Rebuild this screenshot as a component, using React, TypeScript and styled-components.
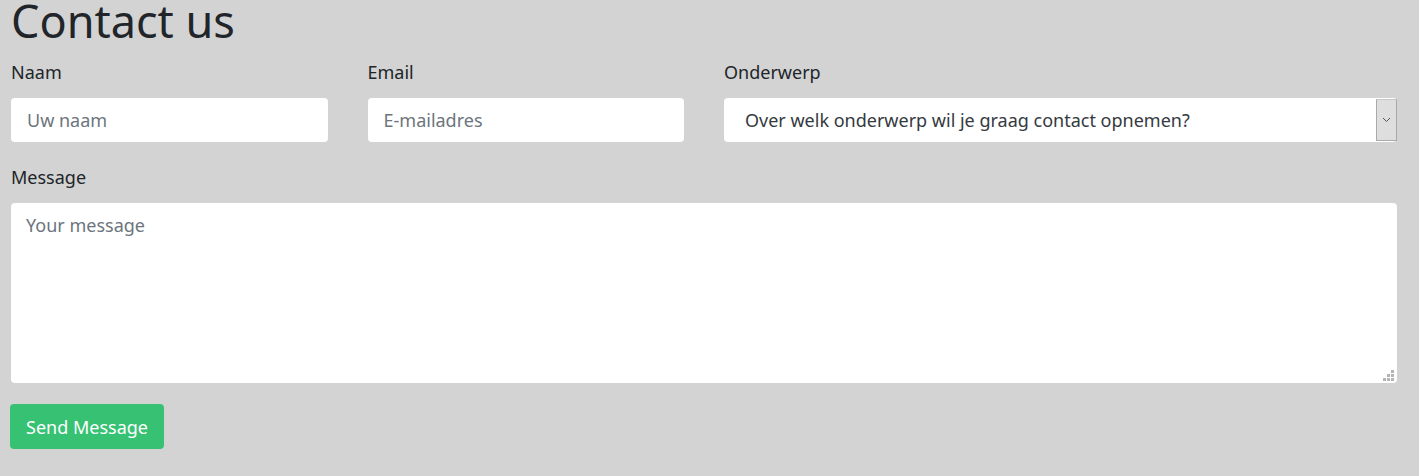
import React from "react";
import styled, { createGlobalStyle } from "styled-components";

const Global = createGlobalStyle`
  html, body { margin: 0; padding: 0; background: #d3d3d3; }
  body { font-family: "Noto Sans", "Open Sans", sans-serif; color: #212529; }
  * { box-sizing: border-box; }
`;

const Page = styled.div`
  padding: 0 22px 0 11px;
`;

const Title = styled.h1`
  margin: -6px 0 0 0;
  font-size: 45px;
  font-weight: 400;
  line-height: 54px;
  color: #212529;
`;

const Row = styled.div`
  display: grid;
  grid-template-columns: repeat(12, 1fr);
  column-gap: 40px;
  margin-top: 12px;
`;

const Field = styled.div<{ $span: number }>`
  grid-column: span ${(p) => p.$span};
  display: flex;
  flex-direction: column;
`;

const Label = styled.label`
  font-size: 18px;
  line-height: 24px;
  margin-bottom: 14px;
  color: #212529;
`;

const Input = styled.input`
  height: 44px;
  border: none;
  border-radius: 4px;
  background: #fff;
  padding: 0 16px;
  font-family: inherit;
  font-size: 18px;
  color: #495057;
  outline: none;
  &::placeholder { color: #6c757d; }
`;

const SelectBox = styled.div`
  height: 44px;
  display: flex;
  align-items: stretch;
  background: #fff;
  border-radius: 4px;
`;

const SelectText = styled.div`
  flex: 1;
  display: flex;
  align-items: center;
  padding-left: 21px;
  font-size: 18px;
  color: #343a40;
`;

const Arrow = styled.div`
  width: 21px;
  background: #dedede;
  border: 1px solid #a9a9a9;
  border-top-color: #c6c6c6;
  display: flex;
  align-items: center;
  justify-content: center;
  margin: 1px 0;
`;

const MessageBlock = styled.div`
  display: flex;
  flex-direction: column;
  margin-top: 23px;
`;

const AreaWrap = styled.div`
  position: relative;
  display: flex;
`;

const TextArea = styled.textarea`
  flex: 1;
  height: 180px;
  border: none;
  border-radius: 4px;
  background: #fff;
  padding: 10px 15px;
  font-family: inherit;
  font-size: 18px;
  line-height: 24px;
  color: #495057;
  resize: none;
  outline: none;
  &::placeholder { color: #6c757d; }
`;

const Grip = styled.svg`
  position: absolute;
  right: 3px;
  bottom: 2px;
  pointer-events: none;
`;

const Button = styled.button`
  margin-top: 21px;
  margin-left: -1px;
  width: 154px;
  height: 45px;
  border: none;
  border-radius: 4px;
  background: #36c173;
  color: #fff;
  font-family: inherit;
  font-size: 18px;
  cursor: pointer;
`;

export default function App() {
  return (
    <Page>
      <Global />
      <Title>Contact us</Title>
      <Row>
        <Field $span={3}>
          <Label>Naam</Label>
          <Input placeholder="Uw naam" />
        </Field>
        <Field $span={3}>
          <Label>Email</Label>
          <Input placeholder="E-mailadres" />
        </Field>
        <Field $span={6}>
          <Label>Onderwerp</Label>
          <SelectBox>
            <SelectText>Over welk onderwerp wil je graag contact opnemen?</SelectText>
            <Arrow>
              <svg width="9" height="6" viewBox="0 0 9 6">
                <path d="M1 1 L4.5 4.5 L8 1" fill="none" stroke="#555" strokeWidth="1" />
              </svg>
            </Arrow>
          </SelectBox>
        </Field>
      </Row>
      <MessageBlock>
        <Label>Message</Label>
        <AreaWrap>
          <TextArea placeholder="Your message" />
          <Grip width="11" height="11" viewBox="0 0 11 11">
            <g fill="#b5b5b5">
              <rect x="8" y="0" width="3" height="3" />
              <rect x="4" y="4" width="3" height="3" />
              <rect x="8" y="4" width="3" height="3" />
              <rect x="0" y="8" width="3" height="3" />
              <rect x="4" y="8" width="3" height="3" />
              <rect x="8" y="8" width="3" height="3" />
            </g>
          </Grip>
        </AreaWrap>
      </MessageBlock>
      <Button>Send Message</Button>
    </Page>
  );
}
